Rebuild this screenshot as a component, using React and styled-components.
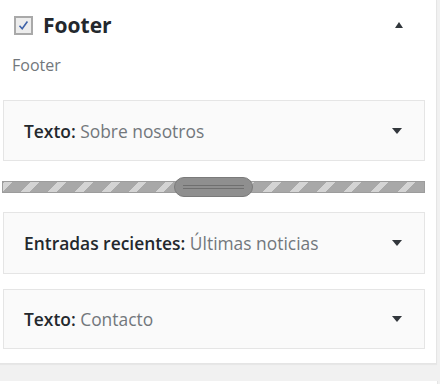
import styled, { createGlobalStyle } from 'styled-components';

const GlobalStyle = createGlobalStyle`
  body {
    margin: 0;
    background: #f1f1f1;
    font-family: "Open Sans", "Liberation Sans", sans-serif;
  }
`;

const Page = styled.div`
  width: 440px;
  height: 384px;
  overflow: hidden;
  display: flex;
  flex-direction: column;
  gap: 17px;
`;

const Panel = styled.div`
  width: 437px;
  box-sizing: border-box;
  background: #fff;
  border-right: 1px solid #e5e5e5;
  border-bottom: 1px solid #e5e5e5;
  box-shadow: 0 1px 1px rgba(0, 0, 0, 0.04);
  padding: 0 11px 14px 3px;
`;

const NextPanel = styled.div`
  width: 437px;
  height: 20px;
  background: #fff;
  border-right: 1px solid #e5e5e5;
`;

const Header = styled.div`
  display: flex;
  align-items: center;
  height: 50px;
  padding: 0 0 0 11px;
  margin-right: 22px;
`;

const Check = styled.span`
  width: 19px;
  height: 19px;
  box-sizing: border-box;
  border: 2px solid #a9a9a9;
  background: #ededed;
  display: flex;
  align-items: center;
  justify-content: center;
  margin-right: 10px;
`;

const Title = styled.h2`
  margin: 0;
  flex: 1;
  font-size: 21px;
  font-weight: 700;
  color: #23282d;
`;

const Sub = styled.p`
  margin: 5px 0 25px 9px;
  font-size: 16px;
  color: #72777c;
  line-height: 20px;
`;

const Widgets = styled.div`
  display: flex;
  flex-direction: column;
`;

const Widget = styled.div`
  height: ${p => p.$h}px;
  box-sizing: border-box;
  border: 1px solid #e5e5e5;
  background: #fafafa;
  display: flex;
  align-items: center;
  padding: 0 22px 0 20px;
  margin-bottom: ${p => p.$mb}px;
  font-size: 17.4px;
`;

const Name = styled.span`
  flex: 1;
  color: #72777c;
  b {
    color: #23282d;
    font-weight: 600;
  }
`;

const Arrow = styled.span`
  width: 0;
  height: 0;
  border-left: ${p => (p.$up ? 4 : 5)}px solid transparent;
  border-right: ${p => (p.$up ? 4 : 5)}px solid transparent;
  border-${p => (p.$up ? 'bottom' : 'top')}: 6px solid #32373c;
`;

const Divider = styled.div`
  position: relative;
  height: 12px;
  margin: 20px 0 19px -1px;
  box-sizing: border-box;
  border: 1px solid #9c9c9c;
  background: repeating-linear-gradient(
    -45deg,
    #a8a8a8 0px,
    #a8a8a8 13px,
    #d4d4d4 13px,
    #d4d4d4 19px
  );
`;

const Handle = styled.span`
  position: absolute;
  left: 171px;
  top: -5px;
  width: 79px;
  height: 20px;
  box-sizing: border-box;
  border-radius: 10px;
  background: #8f8f8f;
  border: 1px solid #7a7a7a;
  &::before,
  &::after {
    content: '';
    position: absolute;
    left: 8px;
    right: 8px;
    height: 1px;
    background: #6f6f6f;
  }
  &::before { top: 7px; }
  &::after { top: 10px; }
`;

export default function App() {
  return (
    <>
      <GlobalStyle />
      <Page>
        <Panel>
          <Header>
            <Check>
              <svg width="13" height="13" viewBox="0 0 13 13">
                <path d="M2.5 6.8 L5.2 9.8 L10.4 2.5" fill="none" stroke="#3f62a8" strokeWidth="1.6" />
              </svg>
            </Check>
            <Title>Footer</Title>
            <Arrow $up />
          </Header>
          <Sub>Footer</Sub>
          <Widgets>
            <Widget $h={61} $mb={0}>
              <Name><b>Texto:</b> Sobre nosotros</Name>
              <Arrow />
            </Widget>
            <Divider><Handle /></Divider>
            <Widget $h={62} $mb={15}>
              <Name><b>Entradas recientes:</b> Últimas noticias</Name>
              <Arrow />
            </Widget>
            <Widget $h={60} $mb={0}>
              <Name><b>Texto:</b> Contacto</Name>
              <Arrow />
            </Widget>
          </Widgets>
        </Panel>
        <NextPanel />
      </Page>
    </>
  );
}
